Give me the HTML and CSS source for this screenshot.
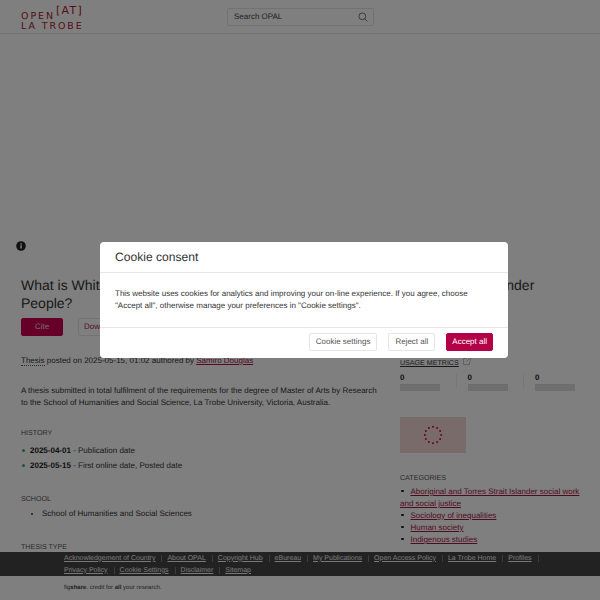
FILE: index.html
```html
<!DOCTYPE html>
<html lang="en">
<head>
	<meta charset="UTF-8">
	<meta name="viewport" content="width=device-width, initial-scale=1.0">
	<link rel="stylesheet" href="styles.css">
	<title>OPEN at La Trobe</title>
</head>
<body>
	<div class="page">
		<header class="top">
			<a class="logo" href="#">
				<span class="logo-row"><span>OPEN</span><span class="logo-at">[AT]</span></span>
				<span class="logo-row">LA TROBE</span>
			</a>
			<div class="search">
				<span>Search OPAL</span>
				<svg width="10" height="10" viewBox="0 0 10 10" fill="none" stroke="#777" stroke-width="1"><circle cx="4.3" cy="4.3" r="3.4"/><path d="M6.8 6.8L9.4 9.4"/></svg>
			</div>
		</header>
		<main class="main">
			<div class="viewer">
				<svg class="info" width="10" height="10" viewBox="0 0 10 10"><circle cx="5" cy="5" r="4.8" fill="#222"/><rect x="4.3" y="4.3" width="1.5" height="3.2" fill="#fff"/><rect x="4.3" y="2.3" width="1.5" height="1.3" fill="#fff"/></svg>
			</div>
			<h1 class="title">What is White Privilege in modern Australia for Aboriginal and Torres Strait Islander People?</h1>
			<div class="actions">
				<a class="btn btn-cite" href="#">Cite</a>
				<a class="btn btn-down" href="#">Download (1.2 MB)</a>
			</div>
			<div class="cols">
				<div class="left">
					<p class="posted"><span class="dotted">Thesis</span> posted on 2025-05-15, 01:02 authored by <a href="#">Samiro Douglas</a></p>
					<p class="desc">A thesis submitted in total fulfilment of the requirements for the degree of Master of Arts by Research to the School of Humanities and Social Science, La Trobe University, Victoria, Australia.</p>
					<h2 class="label">History</h2>
					<ul class="history">
						<li><b>2025-04-01</b> - Publication date</li>
						<li><b>2025-05-15</b> - First online date, Posted date</li>
					</ul>
					<h2 class="label">School</h2>
					<ul class="school">
						<li>School of Humanities and Social Sciences</li>
					</ul>
					<h2 class="label">Thesis type</h2>
				</div>
				<aside class="right">
					<a class="metrics-link" href="#">USAGE METRICS</a>
					<svg class="ext" width="8" height="8" viewBox="0 0 8 8" fill="none" stroke="#aaa" stroke-width=".7"><path d="M6.5 4.5v3h-6v-6h3M4 .5h3.5V4M7.5 .5L3.5 4.5"/></svg>
					<div class="metrics">
						<div class="metric"><b>0</b><span class="metric-bar"></span></div>
						<div class="metric"><b>0</b><span class="metric-bar"></span></div>
						<div class="metric"><b>0</b><span class="metric-bar"></span></div>
					</div>
					<div class="badge">
						<svg width="20" height="20" viewBox="0 0 20 20" fill="#c80f24">
							<circle cx="10" cy="1.8" r="1"/><circle cx="14.1" cy="2.9" r="1"/><circle cx="17.1" cy="5.9" r="1"/>
							<circle cx="18.2" cy="10" r="1"/><circle cx="17.1" cy="14.1" r="1"/><circle cx="14.1" cy="17.1" r="1"/>
							<circle cx="10" cy="18.2" r="1"/><circle cx="5.9" cy="17.1" r="1"/><circle cx="2.9" cy="14.1" r="1"/>
							<circle cx="1.8" cy="10" r="1"/><circle cx="2.9" cy="5.9" r="1"/><circle cx="5.9" cy="2.9" r="1"/>
						</svg>
					</div>
					<h2 class="label">Categories</h2>
					<ul class="cats">
						<li><a href="#">Aboriginal and Torres Strait Islander social work and social justice</a></li>
						<li><a href="#">Sociology of inequalities</a></li>
						<li><a href="#">Human society</a></li>
						<li><a href="#">Indigenous studies</a></li>
					</ul>
				</aside>
			</div>
		</main>
		<footer class="foot">
			<nav class="foot-links">
				<a href="#">Acknowledgement of Country</a>
				<a href="#">About OPAL</a>
				<a href="#">Copyright Hub</a>
				<a href="#">eBureau</a>
				<a href="#">My Publications</a>
				<a href="#">Open Access Policy</a>
				<a href="#">La Trobe Home</a>
				<a href="#">Profiles</a>
				<a href="#">Privacy Policy</a>
				<a href="#">Cookie Settings</a>
				<a href="#">Disclaimer</a>
				<a href="#">Sitemap</a>
			</nav>
			<p class="credit">fig<b>share</b>. credit for <b>all</b> your research.</p>
		</footer>
	</div>
	<div class="overlay">
		<div class="modal">
			<div class="modal-head">Cookie consent</div>
			<div class="modal-body">This website uses cookies for analytics and improving your on-line experience. If you agree, choose "Accept all", otherwise manage your preferences in "Cookie settings".</div>
			<div class="modal-foot">
				<a class="mbtn" href="#">Cookie settings</a>
				<a class="mbtn" href="#">Reject all</a>
				<a class="mbtn mbtn-accept" href="#">Accept all</a>
			</div>
		</div>
	</div>
</body>
</html>
```

FILE: styles.css
```css
html,body{
	margin:0;
	height:100%;
	background:#fff;
	color:#333;
	font-family:"Liberation Sans", Arial, sans-serif;
	font-size:8px;
	line-height:12px;
	text-rendering:geometricPrecision;
}
a{
	color:inherit;
}
.page{
	display:flex;
	flex-direction:column;
	height:100vh;
	overflow:hidden;
}
.top{
	flex:none;
	display:flex;
	height:33px;
	border-bottom:1px solid #e5e5e5;
	padding-left:21px;
}
.logo{
	display:flex;
	flex-direction:column;
	width:61px;
	color:#b1172f;
	text-decoration:none;
	font-family:"DejaVu Sans", sans-serif;
	font-size:9.5px;
	line-height:8px;
	letter-spacing:1.9px;
	padding-top:11px;
}
.logo-row{
	display:flex;
	align-items:flex-end;
	white-space:nowrap;
	height:10px;
}
.logo-at{
	font-size:11px;
	letter-spacing:1.3px;
	margin-left:1px;
	position:relative;
	top:-6px;
}
.search{
	display:flex;
	align-items:center;
	justify-content:space-between;
	box-sizing:border-box;
	width:147px;
	height:18px;
	margin:8px 0 0 145px;
	padding:0 5px 0 6px;
	border:1px solid #e5e5e5;
	border-radius:2px;
	color:#444;
}
.main{
	flex:1;
	overflow:hidden;
}
.viewer{
	height:222px;
	position:relative;
}
.info{
	position:absolute;
	left:16px;
	top:207px;
}
.title{
	margin:20px 21px 0;
	width:535px;
	font-size:14px;
	line-height:18px;
	font-weight:normal;
	color:#333;
}
.actions{
	display:flex;
	gap:15px;
	margin:6px 21px 0;
}
.btn{
	box-sizing:border-box;
	height:18px;
	line-height:16px;
	border:1px solid #e5e5e5;
	border-radius:2px;
	text-align:center;
	text-decoration:none;
}
.btn-cite{
	width:42px;
	background:#cc0050;
	border-color:#cc0050;
	color:#ddd;
}
.btn-down{
	padding:0 5px;
	color:#a8204f;
}
.cols{
	display:grid;
	grid-template-columns:360px 185px;
	gap:19px;
	padding:19px 0 0 21px;
}
.posted{
	margin:0;
}
.dotted{
	border-bottom:1px dotted #555;
}
.posted a,.cats a{
	color:#a3143f;
}
.desc{
	margin:18px 0 0;
}
.label{
	margin:18px 0 0;
	font-size:7.1px;
	line-height:12px;
	font-weight:normal;
	text-transform:uppercase;
	color:#555;
}
.history{
	list-style:none;
	margin:4px 0 0;
	padding:0;
}
.history li{
	position:relative;
	padding-left:9px;
	height:15px;
	line-height:15px;
}
.history li::before{
	content:"";
	position:absolute;
	left:1px;
	top:6px;
	width:3px;
	height:3px;
	border-radius:50%;
	background:#3fa17f;
}
.history b{
	color:#222;
}
.history + .label{
	margin-top:20px;
}
.school{
	margin:3px 0 0;
	padding-left:21px;
}
.school + .label{
	margin-top:21px;
}
.right{
	margin-top:2px;
}
.metrics-link{
	font-size:7.1px;
	color:#333;
}
.ext{
	margin-left:2px;
}
.metrics{
	display:flex;
	margin-top:3px;
}
.metric{
	flex:none;
	display:flex;
	flex-direction:column;
	width:40px;
	margin-right:27.5px;
	position:relative;
}
.metric + .metric::before{
	content:"";
	position:absolute;
	left:-12px;
	top:2px;
	height:14px;
	border-left:1px solid #eee;
}
.metric b{
	color:#222;
}
.metric-bar{
	height:7px;
	background:#ddd;
}
.badge{
	display:flex;
	align-items:center;
	justify-content:center;
	width:66px;
	height:36px;
	margin-top:26px;
	background:#f4d6d6;
}
.right .label{
	margin-top:19px;
}
.cats{
	list-style:none;
	margin:2px 0 0;
	padding:0;
	width:181px;
}
.cats li::before{
	content:"";
	display:inline-block;
	width:2.5px;
	height:2.5px;
	border-radius:50%;
	background:#222;
	margin:0 7px 2px 1px;
}
.foot{
	flex:none;
	height:48px;
}
.foot-links{
	box-sizing:border-box;
	display:flex;
	flex-wrap:wrap;
	align-content:flex-start;
	row-gap:5px;
	height:24px;
	padding:2.5px 55px 0 64px;
	background:#444;
	color:#f0f0f0;
	font-size:7px;
	line-height:7px;
}
.foot-links a{
	margin-right:5px;
	padding-right:6px;
	border-right:1px solid #777;
	text-decoration:underline;
}
.foot-links a:last-child{
	border-right:0;
}
.credit{
	margin:6px 0 0 64px;
	font-size:6px;
	color:#444;
}
.overlay{
	position:fixed;
	inset:0;
	background:rgba(0,0,0,.5);
}
.modal{
	position:absolute;
	left:100px;
	top:242px;
	width:408px;
	height:116px;
	background:#fff;
	border-radius:4px;
	color:#333;
}
.modal-head{
	box-sizing:border-box;
	height:31px;
	padding:8px 15px 0;
	border-bottom:1px solid #e5e5e5;
	font-size:12.1px;
	line-height:15px;
}
.modal-body{
	box-sizing:border-box;
	height:55px;
	padding:15px;
	border-bottom:1px solid #e5e5e5;
}
.modal-foot{
	display:flex;
	justify-content:flex-end;
	gap:11px;
	padding:5px 15px 0;
}
.mbtn{
	box-sizing:border-box;
	height:18px;
	padding:0 6px;
	border:1px solid #e5e5e5;
	border-radius:2px;
	line-height:16px;
	text-decoration:none;
	color:#555;
}
.mbtn-accept{
	padding:0 5px;
	background:#b30047;
	border-color:#b30047;
	color:#fff;
}
```
